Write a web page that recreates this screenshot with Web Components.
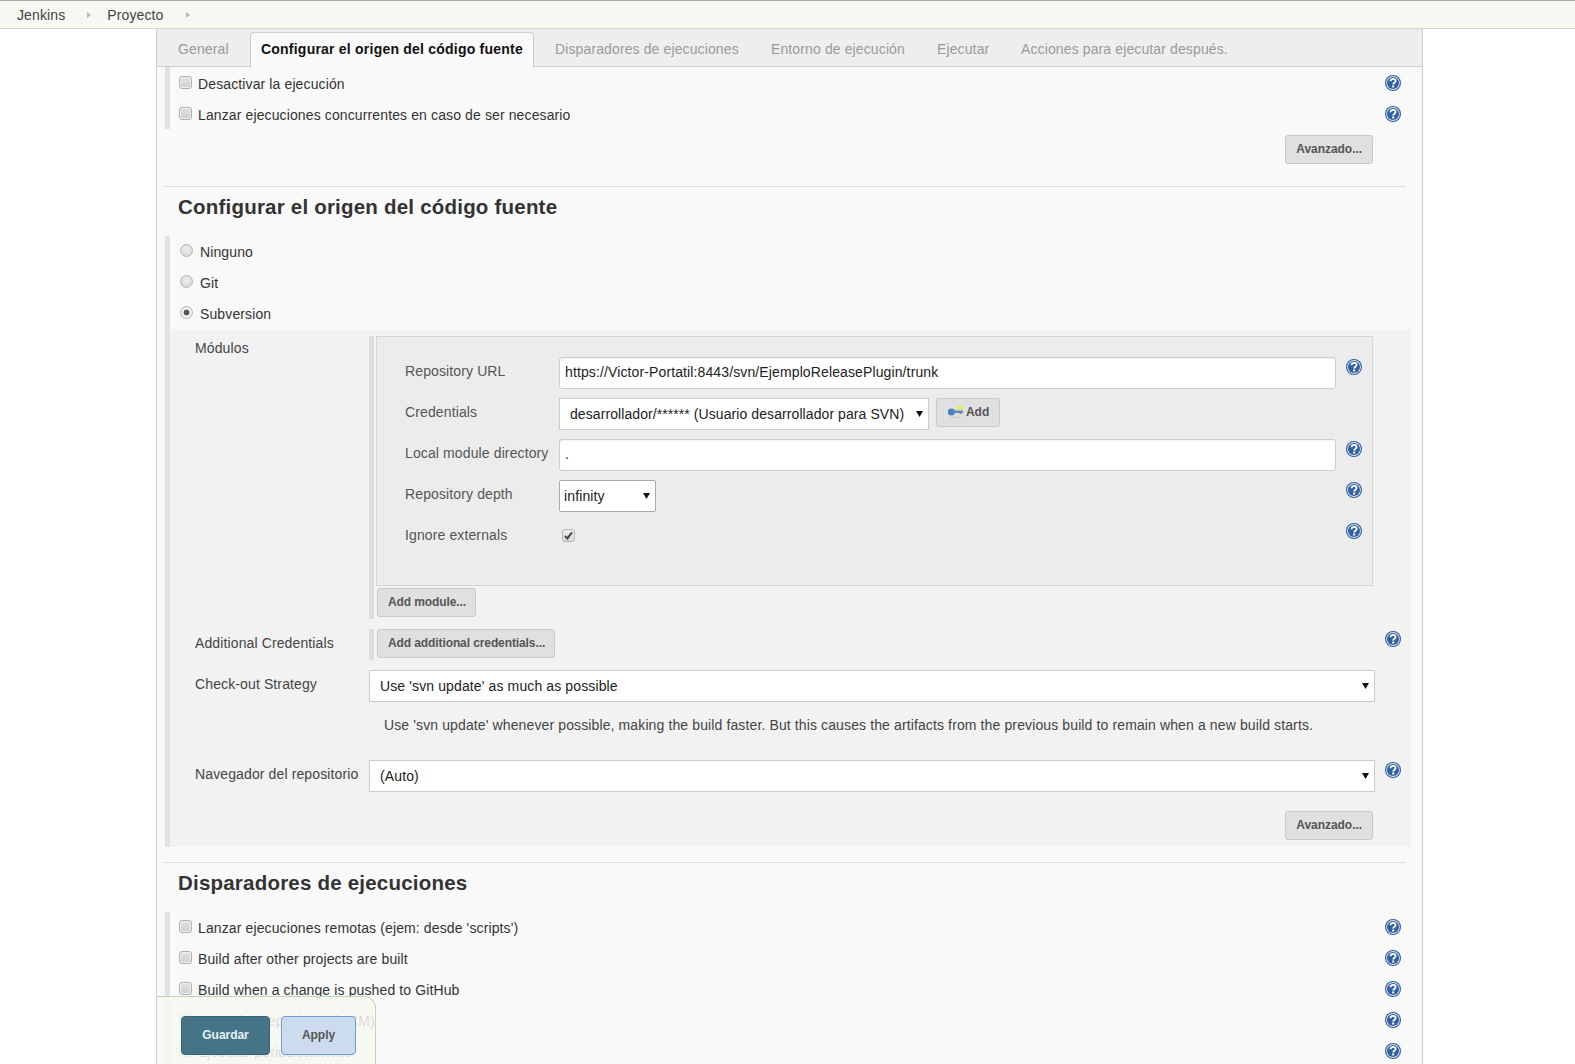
<!DOCTYPE html>
<html lang="es">
<head>
<meta charset="utf-8">
<title>Proyecto Config [Jenkins]</title>
<style>
  html, body { margin: 0; height: 100%; overflow: hidden; background: #fff; }
  body { font: 14px/20px "Liberation Sans", Arial, sans-serif; color: #333; letter-spacing: .12px; }
</style>
</head>
<body>
<jk-app>
  <jk-breadcrumbs>
    <jk-crumb>Jenkins</jk-crumb>
    <jk-crumb>Proyecto</jk-crumb>
  </jk-breadcrumbs>

  <jk-panel>
    <jk-tabs>
      <jk-tab style="--w:83px">General</jk-tab>
      <jk-tab active style="--w:284px">Configurar el origen del código fuente</jk-tab>
      <jk-tab style="--w:216px;margin-left:10px">Disparadores de ejecuciones</jk-tab>
      <jk-tab style="--w:166px">Entorno de ejecución</jk-tab>
      <jk-tab style="--w:84px">Ejecutar</jk-tab>
      <jk-tab>Acciones para ejecutar después.</jk-tab>
    </jk-tabs>

    <jk-group>
      <jk-option help>Desactivar la ejecución</jk-option>
      <jk-option help>Lanzar ejecuciones concurrentes en caso de ser necesario</jk-option>
    </jk-group>
    <jk-advanced><jk-btn>Avanzado...</jk-btn></jk-advanced>

    <jk-section heading="Configurar el origen del código fuente">
      <jk-group>
        <jk-option type="radio" style="--row-top:-1px">Ninguno</jk-option>
        <jk-option type="radio" style="--row-top:-1px">Git</jk-option>
        <jk-option type="radio" checked style="--row-top:-1px">Subversion</jk-option>
        <jk-subblock>
          <jk-field outer label="Módulos" top="2">
            <jk-repeat>
              <jk-box>
                <jk-field label="Repository URL" help><jk-input>https://Victor-Portatil:8443/svn/EjemploReleasePlugin/trunk</jk-input></jk-field>
                <jk-field label="Credentials">
                  <jk-credentials>
                    <jk-select pad="10" style="width:370px;letter-spacing:.08px">desarrollador/****** (Usuario desarrollador para SVN)</jk-select>
                    <jk-btn key>Add</jk-btn>
                  </jk-credentials>
                </jk-field>
                <jk-field label="Local module directory" help><jk-input>.</jk-input></jk-field>
                <jk-field label="Repository depth" help><jk-select pad="4" dark style="width:97px">infinity</jk-select></jk-field>
                <jk-field label="Ignore externals" help><jk-tick></jk-tick></jk-field>
              </jk-box>
              <jk-btn slot="action" style="padding-right:9px;letter-spacing:-.1px">Add module...</jk-btn>
            </jk-repeat>
          </jk-field>
          <jk-field outer label="Additional Credentials" help>
            <jk-repeat bare><jk-btn slot="action" style="padding-right:9px;letter-spacing:-.1px">Add additional credentials...</jk-btn></jk-repeat>
          </jk-field>
          <jk-field outer label="Check-out Strategy"><jk-select pad="10">Use 'svn update' as much as possible</jk-select></jk-field>
          <jk-note>Use 'svn update' whenever possible, making the build faster. But this causes the artifacts from the previous build to remain when a new build starts.</jk-note>
          <jk-field outer label="Navegador del repositorio" help><jk-select pad="10">(Auto)</jk-select></jk-field>
          <jk-advanced inner><jk-btn>Avanzado...</jk-btn></jk-advanced>
        </jk-subblock>
      </jk-group>
    </jk-section>

    <jk-section heading="Disparadores de ejecuciones">
      <jk-group>
        <jk-option help style="--row-top:-1px">Lanzar ejecuciones remotas (ejem: desde 'scripts')</jk-option>
        <jk-option help style="--row-top:-1px">Build after other projects are built</jk-option>
        <jk-option help style="--row-top:-1px">Build when a change is pushed to GitHub</jk-option>
        <jk-option help style="--row-top:-1px">Consultar repositorio (SCM)</jk-option>
        <jk-option help style="--row-top:-1px">Ejecutar periódicamente</jk-option>
      </jk-group>
    </jk-section>
  </jk-panel>

  <jk-savebar>
    <jk-btn primary>Guardar</jk-btn>
    <jk-btn apply>Apply</jk-btn>
  </jk-savebar>
</jk-app>

<script>
// small helper: every element gets an open shadow root cloned from its own template
function register(name, html, extra) {
  const $template = document.createElement("template");
  $template.innerHTML = html;
  class El extends HTMLElement {
    constructor() {
      super();
      this.attachShadow({ mode: "open" });
      this.shadowRoot.appendChild($template.content.cloneNode(true));
    }
    connectedCallback() {
      if (extra) extra(this, this.shadowRoot);
    }
  }
  customElements.define(name, El);
}

const helpIcon = /*html*/ `
<svg width="16" height="16" viewBox="0 0 16 16" style="display:block">
  <circle cx="8" cy="8" r="8" fill="#2f5c9c"/>
  <circle cx="8" cy="8" r="6.9" fill="#dfe7f2"/>
  <circle cx="8" cy="8" r="6" fill="#33609f"/>
  <path d="M5.5 6.2C5.6 4.6 6.8 3.8 8.1 3.8C9.6 3.8 10.6 4.8 10.6 6C10.6 7.7 8.2 7.7 8.2 9.6" fill="none" stroke="#fff" stroke-width="1.8"/>
  <rect x="7.2" y="10.5" width="2" height="2" fill="#fff"/>
</svg>`;

register("jk-app", /*html*/ `
<style>
  :host { display: block; position: relative; height: 1064px; overflow: hidden; }
</style>
<slot></slot>`);

register("jk-breadcrumbs", /*html*/ `
<style>
  :host {
    display: flex; height: 27px; padding-left: 17px; align-items: center;
    background: #f6f8f1; border-top: 1px solid #aaa; border-bottom: 1px solid #d3d3d3;
  }
</style>
<slot></slot>`);

register("jk-crumb", /*html*/ `
<style>
  :host { display: flex; align-items: center; color: #444; }
  i {
    width: 0; height: 0; margin: 1px 16px 0 22px;
    border-left: 4px solid #b5b5b5; border-top: 3.5px solid transparent; border-bottom: 3.5px solid transparent;
  }
</style>
<slot></slot><i></i>`);

register("jk-panel", /*html*/ `
<style>
  :host {
    display: block; width: 1265px; margin-left: 156px; height: 1035px;
    background: #f9f9f9; border-left: 1px solid #ccc; border-right: 1px solid #ccc;
  }
</style>
<slot></slot>`);

register("jk-tabs", /*html*/ `
<style>
  :host {
    display: flex; height: 37px; align-items: flex-end; padding-left: 10px;
    background: #eee; border-bottom: 1px solid #d0d0d0;
  }
</style>
<slot></slot>`);

register("jk-tab", /*html*/ `
<style>
  :host {
    display: block; box-sizing: border-box; width: var(--w, auto); height: 34px; padding: 7px 0 0 11px;
    color: #9a9a9a; white-space: nowrap;
  }
  :host([active]) {
    height: 35px; margin-bottom: -1px; padding: 6px 0 0 10px; color: #111; font-weight: bold; background: #f9f9f9;
    border: 1px solid #ccc; border-bottom: 0; border-radius: 4px 4px 0 0; letter-spacing: .22px;
  }
</style>
<slot></slot>`);

register("jk-group", /*html*/ `
<style>
  :host { display: block; margin: 0 11px 0 8px; border-left: 5px solid #e2e2e2; }
</style>
<slot></slot>`);

register("jk-option", /*html*/ `
<style>
  :host { display: flex; height: 31px; padding-right: 10px; position: relative; top: var(--row-top, 0); }
  .mark { flex: none; box-sizing: border-box; width: 13px; height: 13px; margin: 9px 6px 0 9px; }
  .check {
    border: 1px solid #b0b0b0; border-radius: 3px;
    background: linear-gradient(#e2e2e2, #cfcfcf); box-shadow: inset 0 0 0 1px #f0f0f0;
  }
  .radio {
    margin-left: 10px; margin-right: 7px; border: 1px solid #b5b5b5; border-radius: 50%;
    background: radial-gradient(circle at 50% 40%, #f0f0f0, #d0d0d0);
  }
  .radio.on { background: radial-gradient(circle, #555 0 2.6px, #ececec 3.2px); }
  .label { flex: 1; padding-top: 7px; color: #333; }
  .help { flex: none; width: 16px; margin-top: 8px; }
</style>
<span class="mark"></span>
<span class="label"><slot></slot></span>
<span class="help"></span>`, (el, root) => {
  const mark = root.querySelector(".mark");
  mark.classList.add(el.getAttribute("type") === "radio" ? "radio" : "check");
  if (el.hasAttribute("checked")) mark.classList.add("on");
  if (el.hasAttribute("help")) root.querySelector(".help").innerHTML = helpIcon;
});

register("jk-advanced", /*html*/ `
<style>
  :host { display: flex; justify-content: flex-end; padding: 6px 49px 0 0; }
  :host([inner]) { padding: 9px 38px 7px 0; }
</style>
<slot></slot>`);

register("jk-btn", /*html*/ `
<style>
  :host {
    display: inline-flex; box-sizing: border-box; height: 29px; padding: 0 10px 2px; align-items: center; gap: 2px;
    font-size: 12px; font-weight: bold; color: #555; letter-spacing: -.05px; white-space: nowrap;
    background: #e0e0e0; border: 1px solid #c9c9c9; border-radius: 3px;
  }
  :host([primary]), :host([apply]) { height: 39px; justify-content: center; border-radius: 4px; padding: 0 0 1px; }
  :host([primary]) { width: 89px; color: #e8f0f3; background: #457487; border-color: #3a6272; }
  :host([apply]) { width: 75px; color: #555; background: #ccdcee; border-color: #6f9dd6; }
  svg { display: none; }
  :host([key]) svg { display: block; margin-left: 0; }
</style>
<svg width="17" height="15" viewBox="0 0 17 15">
  <ellipse cx="8" cy="13.6" rx="6" ry="1" fill="#d2d2d2"/>
  <ellipse cx="4.4" cy="8" rx="3.6" ry="3.4" fill="#4f7fbd"/>
  <path d="M6 6.6H16V9H14.5V10H12.5V9H6Z" fill="#5b8ac5"/>
  <circle cx="13" cy="4" r="2.4" fill="#f3e63f"/>
</svg>
<slot></slot>`);

register("jk-section", /*html*/ `
<style>
  :host { display: block; margin-top: 22px; }
  :host(:last-child) { margin-top: 15px; }
  hr { margin: 0 16px 0 6px; border: 0; border-top: 1px solid #ddd; }
  h2 { margin: 0 0 9px 21px; font-size: 20.5px; line-height: 40px; height: 40px; color: #333; font-weight: bold; letter-spacing: .21px; }
</style>
<hr>
<h2></h2>
<slot></slot>`, (el, root) => {
  root.querySelector("h2").textContent = el.getAttribute("heading");
});

register("jk-subblock", /*html*/ `
<style>
  :host { display: block; padding: 7px 0 0 25px; background: #f2f2f2; }
</style>
<slot></slot>`);

register("jk-field", /*html*/ `
<style>
  :host {
    display: grid; grid-template-columns: 154px 777px 26px;
    margin-bottom: 9px; color: #555;
  }
  :host([outer]) { grid-template-columns: 174px 1006px 26px; color: #444; margin-bottom: 10px; }
  .label { padding-top: 4px; white-space: nowrap; }
  .help { grid-column: 3; margin: 2px 0 0 10px; }
</style>
<span class="label"></span>
<div><slot></slot></div>
<span class="help"></span>`, (el, root) => {
  const label = root.querySelector(".label");
  label.textContent = el.getAttribute("label");
  if (el.hasAttribute("top")) label.style.paddingTop = el.getAttribute("top") + "px";
  if (el.hasAttribute("help")) root.querySelector(".help").innerHTML = helpIcon;
});

register("jk-repeat", /*html*/ `
<style>
  :host { display: block; width: 1006px; box-sizing: border-box; }
  .bar { border-left: 5px solid #ddd; padding: 0 0 2px 2px; }
  .act { display: block; margin: 2px 0 0 1px; }
  :host([bare]) .act { margin-top: 0; }
</style>
<div class="bar">
  <slot></slot>
  <div class="act"><slot name="action"></slot></div>
</div>`);

register("jk-box", /*html*/ `
<style>
  :host {
    display: block; box-sizing: border-box; width: 997px; height: 250px; padding: 20px 0 0 28px;
    background: #ececec; border: 1px solid #d5d5d5;
  }
</style>
<slot></slot>`);

register("jk-input", /*html*/ `
<style>
  :host {
    display: block; box-sizing: border-box; height: 32px; padding: 4px 0 0 5px; color: #222; white-space: nowrap;
    background: #fff; border: 1px solid #ccc; border-radius: 3px; box-shadow: inset 0 1px 1px rgba(0,0,0,.05);
  }
</style>
<slot></slot>`);

register("jk-select", /*html*/ `
<style>
  :host {
    display: flex; box-sizing: border-box; height: 32px; align-items: center; justify-content: space-between;
    padding: 0 5px 0 var(--pad, 10px); color: #222; white-space: nowrap; background: #fff; border: 1px solid #ccc;
  }
  :host([dark]) { border-color: #aaa; border-radius: 2px; }
  svg { flex: none; margin-top: -1px; }
</style>
<span><slot></slot></span>
<svg width="7" height="6" viewBox="0 0 7 6"><path d="M0 0H7L3.5 6Z" fill="#111"/></svg>`, (el) => {
  el.style.setProperty("--pad", el.getAttribute("pad") + "px");
});

register("jk-credentials", /*html*/ `
<style>
  :host { display: flex; gap: 7px; align-items: flex-start; }
</style>
<slot></slot>`);

register("jk-tick", /*html*/ `
<style>
  :host { display: block; padding: 8px 0 0 3px; height: 20px; }
  span {
    display: block; box-sizing: border-box; width: 13px; height: 13px; border: 1px solid #b5b5b5; border-radius: 3px;
    background: linear-gradient(#efefef, #d8d8d8);
  }
  svg { display: block; margin: 1px; }
</style>
<span><svg width="9" height="9" viewBox="0 0 9 9"><path d="M1 5L3.4 7.4L8 1.4" fill="none" stroke="#444" stroke-width="2"/></svg></span>`);

register("jk-note", /*html*/ `
<style>
  :host { display: block; height: 58px; padding: 13px 0 0 189px; margin-top: -10px; box-sizing: border-box; color: #444; white-space: nowrap; }
</style>
<slot></slot>`);

register("jk-savebar", /*html*/ `
<style>
  :host {
    position: absolute; left: 157px; top: 996px; width: 219px; height: 80px; box-sizing: border-box;
    display: flex; gap: 11px; padding: 19px 0 0 24px; align-items: flex-start;
    background: rgba(246, 248, 241, .85); border: 1px solid #bcd4c0; border-bottom: 0; border-left: 0; border-radius: 0 12px 0 0;
  }
</style>
<slot></slot>`);
</script>
</body>
</html>
